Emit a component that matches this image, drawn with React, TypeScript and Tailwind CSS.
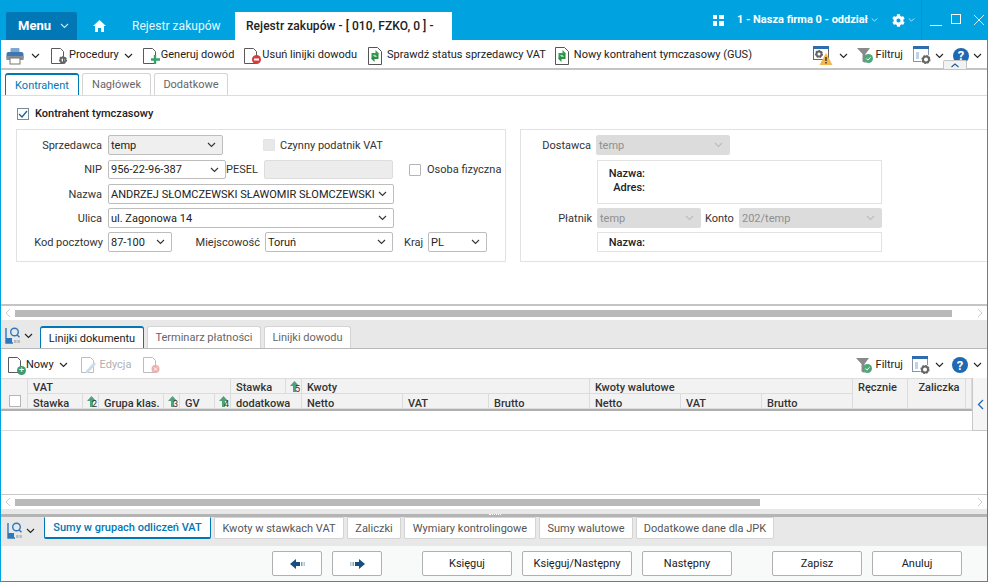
import React from "react";
import { FaCog } from "react-icons/fa";

const Chev = ({ className = "text-[#1f5f99]", w = 9 }: { className?: string; w?: number }) => (
  <svg width={w} height={6} viewBox="0 0 9 6" fill="none" className={`shrink-0 ${className}`}>
    <path d="M1 1l3.5 3.5L8 1" stroke="currentColor" strokeWidth="1.1" />
  </svg>
);

const Doc = ({ children }: { children?: React.ReactNode }) => (
  <svg width="19" height="20" viewBox="0 0 19 20" fill="none" className="shrink-0">
    <path d="M1.5 2.5h9l3 3v12h-12z" fill="#fff" stroke="#5a5a5a" />
    {children}
  </svg>
);

const Gear = ({ x, y, r = 4, c = "#666" }: { x: number; y: number; r?: number; c?: string }) => (
  <g>
    <circle cx={x} cy={y} r={r - 1} fill="none" stroke={c} strokeWidth="2" />
    <circle cx={x} cy={y} r={r} fill="none" stroke={c} strokeWidth="1.2" strokeDasharray="1.6 1.5" />
  </g>
);

const Printer = () => (
  <svg width="18" height="18" viewBox="0 0 18 18" className="shrink-0">
    <rect x="4.5" y="1" width="9" height="5" rx="1" fill="#7fa8cf" />
    <rect x="0.5" y="5" width="17" height="8" rx="2" fill="#3d78b5" />
    <rect x="0.5" y="9" width="17" height="4" fill="#8a8f94" />
    <rect x="4" y="11" width="10" height="6" fill="#fff" stroke="#777" />
  </svg>
);

const SyncDoc = () => (
  <svg width="14" height="18" viewBox="0 0 14 18" fill="none" className="shrink-0">
    <path d="M.5.5h9l4 4v13H.5z" fill="#fff" stroke="#555" />
    <path d="M7.5 3l3.5 3.5L7.5 10V8H5.5v3H3.5V6h4z" fill="#2fa04f" />
    <path d="M6.5 15L3 11.5 6.5 8v2h2V7h2v5h-4z" fill="#2b8f47" />
  </svg>
);

const Funnel = () => (
  <svg width="17" height="17" viewBox="0 0 17 17" className="shrink-0">
    <path d="M0 1h13L8.5 7v9l-3-1.5V7z" fill="#8a8a8a" />
    <circle cx="11.5" cy="11.5" r="4.5" fill="#4fa77a" />
    <path d="M9.3 11.5l1.6 1.6 2.6-2.8" stroke="#fff" fill="none" strokeWidth="1" />
  </svg>
);

const WinGear = () => (
  <svg width="18" height="19" viewBox="0 0 18 19" fill="none" className="shrink-0">
    <rect x=".5" y=".5" width="15" height="15" fill="#fff" stroke="#8a94a0" />
    <rect x="0" y="0" width="16" height="3" fill="#2d6cae" />
    <rect x="3" y="6" width="3" height="7" fill="#bcd3ea" />
    <circle cx="13" cy="13.5" r="5" fill="#fff" />
    <Gear x={13} y={13.5} r={4} />
  </svg>
);

const WinWarn = () => (
  <svg width="20" height="19" viewBox="0 0 20 19" fill="none" className="shrink-0">
    <rect x=".5" y=".5" width="15" height="13" fill="#fff" stroke="#666" />
    <rect x="0" y="0" width="16" height="3" fill="#2d6cae" />
    <Gear x={6} y={8} r={3.5} />
    <path d="M13 7l6.5 12h-13z" fill="#f2b84f" />
    <path d="M13 11v4M13 16v1.5" stroke="#333" strokeWidth="1.4" />
  </svg>
);

const Help = () => (
  <span className="flex size-[16px] shrink-0 items-center justify-center rounded-full bg-[#1f68b2] text-[13px] leading-none font-bold text-white">
    ?
  </span>
);

const Sort = ({ n }: { n: string }) => (
  <span className="relative flex h-full w-full items-center justify-center">
    <svg width="9" height="11" viewBox="0 0 9 11" className="-ml-1">
      <path d="M4.5 0L9 5H6v6H3V5H0z" fill="#4ea27a" />
    </svg>
    <span className="absolute right-[1px] bottom-[-1px] text-[9px] leading-none font-normal text-[#333]">{n}</span>
  </span>
);

const ViewIcon = () => (
  <svg width="16" height="17" viewBox="0 0 16 17" fill="none" className="shrink-0">
    <circle cx="9.5" cy="5" r="3.8" stroke="#2d78bd" strokeWidth="1.4" />
    <path d="M12.2 8l2.3 2.3" stroke="#2d78bd" strokeWidth="1.4" />
    <path d="M1 1v15h7" stroke="#2d78bd" strokeWidth="1.4" />
    <rect x="1" y="11" width="6" height="5" fill="#2d78bd" />
    <rect x="9" y="13" width="2.6" height="3" fill="#bbb" />
    <rect x="12.4" y="13" width="2.6" height="3" fill="#bbb" />
  </svg>
);

// labels sit a pixel lower than plain centering gives
const Lbl = ({ children, className = "" }: { children: React.ReactNode; className?: string }) => (
  <span className={`shrink-0 pt-[2px] ${className}`}>{children}</span>
);

const Select = ({ value, className, disabled, gray }: { value: string; className: string; disabled?: boolean; gray?: boolean }) => (
  <div
    className={`flex shrink-0 items-center justify-between rounded-[2px] border pr-[6px] pl-[2px] ${
      disabled
        ? "border-[#dcdcdc] bg-[#dcdcdc] text-[#8f8f8f]"
        : gray
          ? "border-[#bdbdbd] bg-[#efefef] text-[#222]"
          : "border-[#bdbdbd] bg-white text-[#222]"
    } ${className}`}
  >
    <Lbl className="whitespace-nowrap">{value}</Lbl>
    <Chev className={disabled ? "text-[#bdbdbd]" : "text-[#333]"} />
  </div>
);

const Check = ({ disabled }: { disabled?: boolean }) => (
  <span className={`block size-[12px] rounded-[1px] border ${disabled ? "border-[#e4e4e4] bg-[#e8e8e8]" : "border-[#b5b5b5] bg-white"}`} />
);

const TabBtn = ({ label, active, className = "" }: { label: string; active?: boolean; className?: string }) => (
  <div
    className={`flex h-[22px] items-center justify-center rounded-t-[3px] border border-b-0 bg-white pt-[2px] whitespace-nowrap ${
      active ? "border-t-2 border-[#0277b5]" : "border-[#d4d4d4] text-[#666]"
    } ${className}`}
  >
    {label}
  </div>
);

const BottomTab = ({ label, active, className = "" }: { label: string; active?: boolean; className?: string }) => (
  <div
    className={`flex h-[22px] items-center justify-center rounded-b-[2px] border bg-white pt-[2px] whitespace-nowrap ${
      active ? "border-x-[#0277b5] border-t-transparent border-b-2 border-b-[#0277b5] font-medium text-[#0277b5]" : "border-[#d4d4d4] text-[#555]"
    } ${className}`}
  >
    {label}
  </div>
);

const Scroll = ({ thumb }: { thumb: string }) => (
  <div className="flex h-[14px] shrink-0 items-center bg-white">
    <svg width="14" height="10" viewBox="0 0 14 10" fill="none" className="shrink-0">
      <path d="M9 1L5 5l4 4" stroke="#ccc" />
    </svg>
    <div className="h-[7px] flex-1">
      <div className={`h-full bg-[#b9b9b9] ${thumb}`} />
    </div>
    <svg width="14" height="10" viewBox="0 0 14 10" fill="none" className="shrink-0">
      <path d="M5 1l4 4-4 4" stroke="#ccc" />
    </svg>
  </div>
);

const FootBtn = ({ children, className }: { children: React.ReactNode; className: string }) => (
  <div className={`flex h-[25px] shrink-0 items-center justify-center rounded-[2px] border border-[#b0b0b0] bg-white text-[#222] ${className}`}>
    {children}
  </div>
);

const Arrow = ({ flip }: { flip?: boolean }) => (
  <svg width="15" height="10" viewBox="0 0 15 10" className={flip ? "rotate-180" : ""}>
    <path d="M0 5l6-5v3h4v4H6v3z" fill="#15507f" />
    <rect x="11" y="3" width="1.5" height="4" fill="#7fa3bf" />
    <rect x="13.5" y="3" width="1.5" height="4" fill="#b5c8d8" />
  </svg>
);

const Head = ({ children, className = "" }: { children?: React.ReactNode; className?: string }) => (
  <div className={`flex items-center border-r border-b border-[#dcdcdc] pl-[5px] leading-none font-medium whitespace-nowrap text-[#333] ${className}`}>{children}</div>
);

export default function App() {
  return (
    <div className="flex h-[582px] w-[988px] flex-col overflow-hidden border-x border-b border-[#00a3e0] bg-white font-['Roboto',sans-serif] text-[11px] text-[#222]">
      {/* title bar */}
      <div className="-mx-px flex h-[40px] shrink-0 items-end bg-[#00a3e0] text-white">
        <div className="ml-[6px] flex h-[28px] w-[71px] shrink-0 items-center gap-[9px] rounded-t-[2px] bg-[#0277b5] pl-[12px] text-[13px] font-bold">
          Menu <Chev className="text-[#cfe6f3]" />
        </div>
        <svg width="13" height="12" viewBox="0 0 13 12" className="mb-[8px] ml-[16px] shrink-0">
          <path d="M6.5 0L13 6h-2v6H8V8H5v4H2V6H0z" fill="#fff" />
        </svg>
        <div className="ml-[26px] flex h-[28px] w-[88px] shrink-0 items-center text-[12px] tracking-[0.05px] whitespace-nowrap text-[#e8f6fc]">Rejestr zakupów</div>
        <div className="ml-[15px] flex h-[28px] w-[217px] shrink-0 items-center bg-white pl-[11px] text-[12px] tracking-[0.05px] font-medium whitespace-nowrap text-[#222]">
          Rejestr zakupów - [ 010, FZKO, 0 ] -
        </div>
        <div className="flex h-[40px] flex-1 items-center justify-end pr-[3px]">
          <svg width="11" height="11" viewBox="0 0 11 11" className="shrink-0">
            <path d="M0 0h4v4H0zM6 0h5v4H6zM0 6h4v5H0zM6 6h5v5H6z" fill="#fff" />
          </svg>
          <span className="ml-[13px] text-[11px] font-bold whitespace-nowrap">1 - Nasza firma 0 - oddział</span>
          <Chev className="ml-[3px] text-[#d7effa]" w={7} />
          <FaCog className="ml-[14px] size-[13px] shrink-0 text-white" />
          <Chev className="ml-[3px] text-[#d7effa]" w={7} />
          <div className="ml-[6px] h-[40px] w-px bg-[#1a8cc4]" />
          <div className="ml-[8px] h-px w-[12px] translate-y-[5px] bg-white" />
          <div className="ml-[9px] size-[10px] -translate-y-[1px] border border-white" />
          <svg width="12" height="12" viewBox="0 0 12 12" className="ml-[12px] shrink-0" fill="none">
            <path d="M1 1l10 10M11 1L1 11" stroke="#d7effa" />
          </svg>
        </div>
      </div>

      {/* main toolbar */}
      <div className="relative flex h-[30px] shrink-0 items-center border-b-2 border-[#c4c4c4] pt-[3px] pl-[5px] whitespace-nowrap">
        <Printer />
        <Chev className="ml-[7px]" />
        <div className="ml-[10px] flex items-center">
          <Doc>
            <Gear x={13} y={14} r={3.5} />
          </Doc>
          <span>Procedury</span>
          <Chev className="ml-[5px]" />
        </div>
        <div className="ml-[9px] flex items-center">
          <Doc>
            <path d="M13 9v9M9 13.5h9" stroke="#36a468" strokeWidth="2.4" />
          </Doc>
          <span>Generuj dowód</span>
        </div>
        <div className="ml-[9px] flex items-center">
          <Doc>
            <circle cx="13.5" cy="13.5" r="4.5" fill="#d93a3a" />
            <rect x="11" y="12.5" width="5" height="2" fill="#fff" />
          </Doc>
          <span>Usuń linijki dowodu</span>
        </div>
        <div className="ml-[11px] flex items-center gap-[5px]">
          <SyncDoc />
          <span>Sprawdź status sprzedawcy VAT</span>
        </div>
        <div className="ml-[9px] flex items-center gap-[5px]">
          <SyncDoc />
          <span>Nowy kontrahent tymczasowy (GUS)</span>
        </div>
        <div className="ml-auto flex items-center pr-[5px]">
          <WinWarn />
          <Chev className="ml-[6px]" />
          <span className="ml-[9px]">
            <Funnel />
          </span>
          <span className="ml-[2px]">Filtruj</span>
          <span className="ml-[10px]">
            <WinGear />
          </span>
          <Chev className="ml-[4px]" />
          <span className="ml-[9px]">
            <Help />
          </span>
          <Chev className="ml-[4px]" />
        </div>
        <div className="absolute top-[20px] left-[942px] flex h-[9px] w-[24px] items-center justify-center rounded-t-[2px] border border-b-0 border-[#c4c4c4] bg-[#f2f2f2]">
          <svg width="8" height="5" viewBox="0 0 8 5" fill="none">
            <path d="M.5 4L4 1l3.5 3" stroke="#1f5f99" strokeWidth="1.2" />
          </svg>
        </div>
      </div>

      {/* form tabs */}
      <div className="flex h-[26px] shrink-0 items-end gap-[3px] border-b border-[#dcdcdc] pl-[4px]">
        <TabBtn label="Kontrahent" active className="w-[74px] text-[#0277b5]" />
        <TabBtn label="Nagłówek" className="w-[69px]" />
        <TabBtn label="Dodatkowe" className="w-[74px]" />
      </div>

      {/* form */}
      <div className="flex h-[210px] shrink-0 flex-col border-b-2 border-[#c4c4c4]">
        <div className="flex h-[33px] items-center gap-[6px] pt-[2px] pl-[16px]">
          <span className="flex size-[12px] items-center justify-center border border-[#7a8a99] bg-white">
            <svg width="10" height="8" viewBox="0 0 10 8" fill="none">
              <path d="M1 4l3 3 5-6" stroke="#1f5f99" strokeWidth="1.3" />
            </svg>
          </span>
          <Lbl className="font-medium">Kontrahent tymczasowy</Lbl>
        </div>
        <div className="flex gap-[14px] pl-[15px]">
          {/* seller */}
          <div className="flex h-[133px] w-[490px] shrink-0 flex-col border border-[#e2e2e2] pt-[5px] whitespace-nowrap text-[#333]">
            <div className="flex h-[20px] items-center">
              <Lbl className="w-[85px] text-right">Sprzedawca</Lbl>
              <Select value="temp" gray className="ml-[6px] h-[20px] w-[115px]" />
              <span className="ml-[40px]">
                <Check disabled />
              </span>
              <Lbl className="ml-[5px]">Czynny podatnik VAT</Lbl>
            </div>
            <div className="mt-[5px] flex h-[19px] items-center">
              <Lbl className="w-[85px] text-right">NIP</Lbl>
              <Select value="956-22-96-387" className="ml-[6px] h-[19px] w-[118px]" />
              <Lbl className="w-[38px]">PESEL</Lbl>
              <div className="h-[19px] w-[129px] shrink-0 rounded-[2px] border border-[#ddd] bg-[#ececec]" />
              <span className="ml-[16px]">
                <Check />
              </span>
              <Lbl className="ml-[6px]">Osoba fizyczna</Lbl>
            </div>
            <div className="mt-[5px] flex h-[20px] items-center">
              <Lbl className="w-[85px] text-right">Nazwa</Lbl>
              <Select value="ANDRZEJ SŁOMCZEWSKI SŁAWOMIR SŁOMCZEWSKI" className="ml-[6px] h-[20px] w-[286px]" />
            </div>
            <div className="mt-[4px] flex h-[20px] items-center">
              <Lbl className="w-[85px] text-right">Ulica</Lbl>
              <Select value="ul. Zagonowa 14" className="ml-[6px] h-[20px] w-[286px]" />
            </div>
            <div className="mt-[4px] flex h-[20px] items-center">
              <Lbl className="w-[86px] text-right">Kod pocztowy</Lbl>
              <Select value="87-100" className="ml-[5px] h-[20px] w-[64px]" />
              <Lbl className="ml-[23px] w-[65px] text-right">Miejscowość</Lbl>
              <Select value="Toruń" className="ml-[5px] h-[20px] w-[128px]" />
              <Lbl className="ml-[11px] w-[20px]">Kraj</Lbl>
              <Select value="PL" className="ml-[4px] h-[20px] w-[59px]" />
            </div>
          </div>
          {/* supplier */}
          <div className="flex h-[133px] flex-1 flex-col border-y border-l border-[#e2e2e2] pt-[5px] whitespace-nowrap text-[#333]">
            <div className="flex h-[20px] items-center">
              <Lbl className="w-[70px] text-right">Dostawca</Lbl>
              <Select value="temp" disabled className="ml-[5px] h-[20px] w-[134px]" />
            </div>
            <div className="mt-[5px] ml-[76px] flex h-[44px] w-[285px] flex-col justify-center border border-[#e2e2e2] pb-[2px] font-medium text-[#222]">
              <span className="w-[47px] text-right leading-[14px]">Nazwa:</span>
              <span className="w-[47px] text-right leading-[14px]">Adres:</span>
            </div>
            <div className="mt-[4px] flex h-[20px] items-center">
              <Lbl className="w-[71px] text-right">Płatnik</Lbl>
              <Select value="temp" disabled className="ml-[5px] h-[20px] w-[104px]" />
              <Lbl className="ml-[4px] w-[34px]">Konto</Lbl>
              <Select value="202/temp" disabled className="h-[20px] w-[143px]" />
            </div>
            <div className="mt-[4px] ml-[76px] flex h-[20px] w-[285px] items-center border border-[#e2e2e2] pt-[3px] font-medium text-[#222]">
              <span className="w-[47px] text-right">Nazwa:</span>
            </div>
          </div>
        </div>
      </div>

      <Scroll thumb="w-[937px]" />

      {/* middle tabs */}
      <div className="flex h-[29px] shrink-0 items-end border-b border-[#b8b8b8] bg-[#e8e8e8] pl-[4px]">
        <div className="mb-[4px] flex items-center gap-[3px]">
          <ViewIcon />
          <Chev className="text-[#222]" />
        </div>
        <div className="ml-[7px] flex gap-[3px]">
          <TabBtn label="Linijki dokumentu" active className="w-[104px]" />
          <TabBtn label="Terminarz płatności" className="w-[114px]" />
          <TabBtn label="Linijki dowodu" className="w-[87px]" />
        </div>
      </div>

      {/* grid toolbar */}
      <div className="flex h-[29px] shrink-0 items-center pt-[3px] pl-[6px] whitespace-nowrap">
        <Doc />
        <span className="-ml-[9px] flex size-[9px] translate-y-[5px] items-center justify-center rounded-full bg-[#3d9c6c] text-[9px] leading-none text-white">+</span>
        <span>Nowy</span>
        <Chev className="ml-[5px]" />
        <div className="ml-[12px] opacity-40">
          <Doc>
            <path d="M6 16l8-9 2 2-8 9H6z" fill="#7fa8cf" />
          </Doc>
        </div>
        <span className="ml-[1px] text-[#b0b0b0]">Edycja</span>
        <div className="ml-[11px] opacity-40">
          <Doc>
            <circle cx="13.5" cy="14" r="4" fill="#d93a3a" />
            <path d="M12 12.5l3 3M15 12.5l-3 3" stroke="#fff" />
          </Doc>
        </div>
        <div className="ml-auto flex items-center pr-[5px]">
          <Funnel />
          <span className="ml-[3px]">Filtruj</span>
          <span className="ml-[9px]">
            <WinGear />
          </span>
          <Chev className="ml-[5px]" />
          <span className="ml-[8px]">
            <Help />
          </span>
          <Chev className="ml-[5px]" />
        </div>
      </div>

      {/* grid */}
      <div className="flex h-[53px] shrink-0">
        <div className="w-[971px] shrink-0">
          <div className="grid h-[33px] grid-cols-[27px_55px_16px_65px_16px_35px_16px_55px_16px_101px_86px_101px_91px_81px_91px_55px_58px_6px] grid-rows-[15px_15px] border-t border-b-2 border-[#dcdcdc] border-b-[#b0b0b0] bg-[#f2f2f2]">
            <Head className="row-span-2 items-end pb-[1px] pl-[4px]">
              <span className="ml-[3px] block size-[12px] border border-[#b5b5b5] bg-white" />
            </Head>
            <Head className="col-span-6 pt-[2px]">VAT</Head>
            <Head className="pt-[2px]">Stawka</Head>
            <Head className="pl-0">
              <Sort n="5" />
            </Head>
            <Head className="col-span-3 pt-[2px]">Kwoty</Head>
            <Head className="col-span-3 pt-[2px]">Kwoty walutowe</Head>
            <Head className="row-span-2 items-start pt-[3px]">Ręcznie</Head>
            <Head className="row-span-2 items-start justify-center pt-[3px] pl-0">Zaliczka</Head>
            <Head className="row-span-2" />
            <Head className="pt-[4px]">Stawka</Head>
            <Head className="pl-0">
              <Sort n="2" />
            </Head>
            <Head className="pt-[4px]">Grupa klas.</Head>
            <Head className="pl-0">
              <Sort n="3" />
            </Head>
            <Head className="pt-[4px]">GV</Head>
            <Head className="pl-0">
              <Sort n="4" />
            </Head>
            <Head className="col-span-2 pt-[4px]">dodatkowa</Head>
            <Head className="pt-[4px]">Netto</Head>
            <Head className="pt-[4px]">VAT</Head>
            <Head className="pt-[4px]">Brutto</Head>
            <Head className="pt-[4px]">Netto</Head>
            <Head className="pt-[4px]">VAT</Head>
            <Head className="pt-[4px]">Brutto</Head>
          </div>
          <div className="h-[20px] border-b border-[#dcdcdc]" />
        </div>
        <div className="flex w-[16px] shrink-0 items-center justify-center border-b border-l border-[#c8c8c8] bg-[#f5f5f5]">
          <svg width="7" height="11" viewBox="0 0 7 11" fill="none">
            <path d="M6 1L1.5 5.5 6 10" stroke="#1f68b2" strokeWidth="1.3" />
          </svg>
        </div>
      </div>
      <div className="flex-1 border-b border-[#c8c8c8]" />

      <Scroll thumb="w-[745px]" />

      {/* bottom tabs */}
      <div className="h-[5px] shrink-0 bg-[#e8e8e8]" />
      <div className="relative flex h-[32px] shrink-0 items-start border-t-[3px] border-[#b4b4b4] bg-[#e8e8e8] pl-[6px]">
        <div className="absolute -top-[3px] left-[488px] h-px w-[12px] border-t border-dotted border-white" />
        <div className="mt-[5px] flex items-center gap-[3px]">
          <ViewIcon />
          <Chev className="text-[#222]" />
        </div>
        <div className="ml-[9px] flex gap-[3px]">
          <BottomTab label="Sumy w grupach odliczeń VAT" active className="w-[167px]" />
          <BottomTab label="Kwoty w stawkach VAT" className="w-[130px]" />
          <BottomTab label="Zaliczki" className="w-[54px]" />
          <BottomTab label="Wymiary kontrolingowe" className="w-[132px]" />
          <BottomTab label="Sumy walutowe" className="w-[94px]" />
          <BottomTab label="Dodatkowe dane dla JPK" className="w-[138px]" />
        </div>
      </div>

      {/* footer */}
      <div className="flex h-[35px] shrink-0 items-start bg-[#f8f9f9] pt-[5px] pl-[271px]">
        <FootBtn className="w-[50px]">
          <Arrow />
        </FootBtn>
        <FootBtn className="ml-[10px] w-[50px]">
          <Arrow flip />
        </FootBtn>
        <FootBtn className="ml-[40px] w-[90px] pt-[2px]">Księguj</FootBtn>
        <FootBtn className="ml-[10px] w-[110px] pt-[2px]">Księguj/Następny</FootBtn>
        <FootBtn className="ml-[10px] w-[90px] pt-[2px]">Następny</FootBtn>
        <FootBtn className="ml-[40px] w-[90px] pt-[2px]">Zapisz</FootBtn>
        <FootBtn className="ml-[10px] w-[90px] pt-[2px]">Anuluj</FootBtn>
      </div>
    </div>
  );
}
